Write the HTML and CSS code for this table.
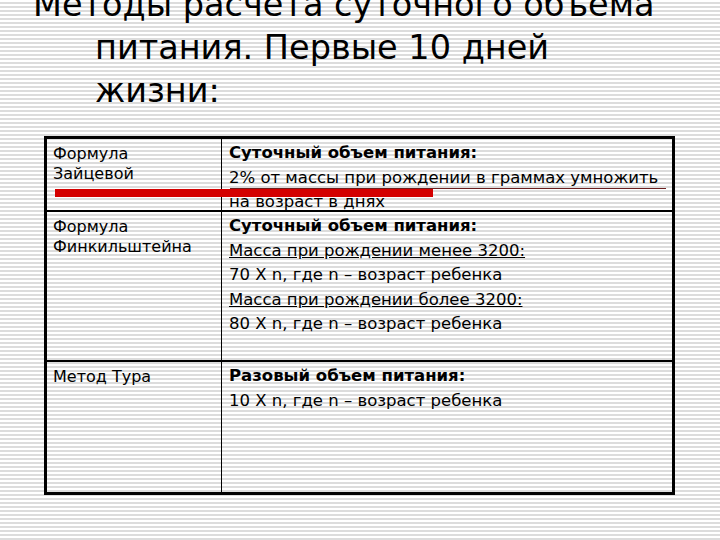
FILE: index.html
```html
<!DOCTYPE html>
<html lang="ru">
<head>
<meta charset="utf-8">
<link rel="stylesheet" href="styles.css">
</head>
<body>
<div class="slide">
  <h1 class="title">Методы расчета суточного объема<br>питания. Первые 10 дней<br>жизни:</h1>
  <div class="table">
    <div class="row row1">
      <div class="cell left">Формула<br>Зайцевой</div>
      <div class="cell right">
        <div class="line b">Суточный объем питания:</div>
        <div class="line">2% от массы при рождении в граммах умножить</div>
        <div class="line">на возраст в днях</div>
      </div>
    </div>
    <div class="row row2">
      <div class="cell left">Формула<br>Финкильштейна</div>
      <div class="cell right">
        <div class="line b">Суточный объем питания:</div>
        <div class="line"><u>Масса при рождении менее 3200:</u></div>
        <div class="line">70 X n, где n – возраст ребенка</div>
        <div class="line"><u>Масса при рождении более 3200:</u></div>
        <div class="line">80 X n, где n – возраст ребенка</div>
      </div>
    </div>
    <div class="row row3">
      <div class="cell left">Метод Тура</div>
      <div class="cell right">
        <div class="line b">Разовый объем питания:</div>
        <div class="line">10 X n, где n – возраст ребенка</div>
      </div>
    </div>
    <div class="mark-thin"></div>
    <div class="mark-red"></div>
  </div>
</div>
</body>
</html>
```
FILE: styles.css
```css
html, body {
  margin: 0;
  padding: 0;
}
body {
  width: 720px;
  height: 540px;
  overflow: hidden;
  background: repeating-linear-gradient(to bottom, #ffffff 0px, #ffffff 2px, #dcdcdc 2px, #dcdcdc 4px);
  font-family: "DejaVu Sans", Tahoma, sans-serif;
  color: #000;
}
.slide {
  padding: 0 0 0 44px;
}
.title {
  margin: -17px 0 0 0;
  padding-left: 51px;
  text-indent: -62px;
  width: 660px;
  white-space: nowrap;
  font-weight: normal;
  font-size: 33.5px;
  line-height: 43px;
  color: #000;
}
.table {
  position: relative;
  margin-top: 24px;
  width: 625px;
  border: 3px solid #000;
}
.row {
  display: grid;
  grid-template-columns: 175px 1fr;
  border-top: 2px solid #000;
  overflow: hidden;
}
.row1 { border-top: none; height: 71px; }
.row2 { height: 148px; }
.row3 { height: 130px; }
.cell {
  padding: 6px 6px;
}
.left {
  border-right: 1px solid #000;
  font-size: 16px;
  line-height: 20px;
  padding-top: 5px;
}
.right {
  font-size: 16.5px;
  line-height: 24.5px;
  padding-top: 2px;
  padding-left: 7px;
}
.b { font-weight: bold; }
.line { white-space: nowrap; }
.mark-thin {
  position: absolute;
  left: 183px;
  top: 49px;
  width: 436px;
  height: 1px;
  background: #6b1f1f;
}
.mark-red {
  position: absolute;
  left: 8px;
  top: 50px;
  width: 378px;
  height: 8px;
  background: #d40000;
}
```
